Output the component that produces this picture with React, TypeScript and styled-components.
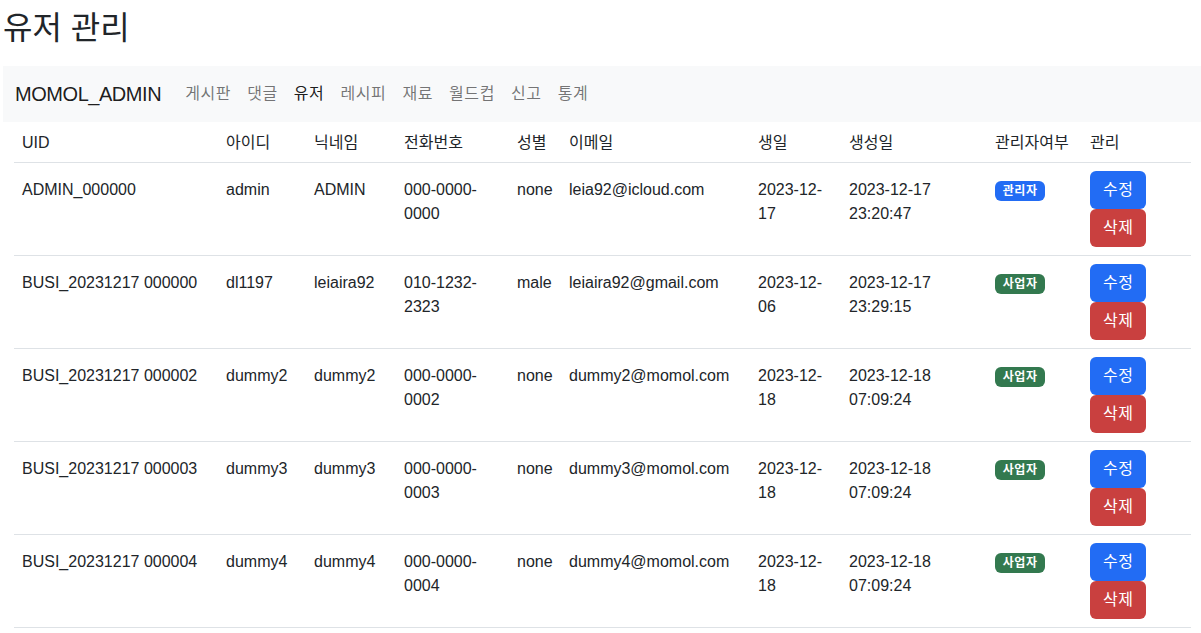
import React from "react";
import styled, { createGlobalStyle } from "styled-components";

const GlobalStyle = createGlobalStyle`
  * { box-sizing: border-box; }
  html, body { margin: 0; padding: 0; background: #fff; }
  body {
    font-family: "Liberation Sans", "Noto Sans CJK KR", sans-serif;
    font-size: 16px;
    line-height: 1.5;
    color: #212529;
  }
`;

const Page = styled.div`
  padding: 0 0 0 3px;
`;

const Title = styled.h2`
  margin: 0;
  padding: 9px 0 0 0;
  height: 66px;
  font-size: 32px;
  font-weight: 400;
  line-height: 1.2;
  color: #212529;
`;

const NavBar = styled.nav`
  display: flex;
  align-items: center;
  height: 56px;
  padding: 8px 12px;
  background: #f8f9fa;
`;

const Brand = styled.span`
  font-size: 20px;
  line-height: 30px;
  padding: 5px 0;
  margin-right: 16px;
  letter-spacing: -0.45px;
  color: rgba(0, 0, 0, 0.9);
`;

const NavList = styled.div`
  display: flex;
  align-items: center;
`;

const NavLink = styled.a<{ $active?: boolean }>`
  display: block;
  padding: 8px;
  line-height: 24px;
  font-size: 16px;
  letter-spacing: 0.6px;
  text-decoration: none;
  color: ${(p) => (p.$active ? "rgba(0,0,0,0.9)" : "rgba(0,0,0,0.55)")};
  cursor: pointer;
`;

const TableWrap = styled.div`
  padding: 0 10px 0 11px;
`;

const Table = styled.table`
  width: 100%;
  border-collapse: collapse;
  table-layout: fixed;
`;

const Col = styled.col<{ $w: number }>`
  width: ${(p) => p.$w}px;
`;

const HeadCell = styled.th`
  text-align: left;
  font-weight: 400;
  padding: 9px 8px 7px;
  line-height: 24px;
  white-space: nowrap;
  border-bottom: 1px solid #dee2e6;
`;

const Row = styled.tr`
  border-bottom: 1px solid #dee2e6;
`;

const Cell = styled.td`
  padding: 8px;
  line-height: 24px;
  vertical-align: baseline;
  word-wrap: break-word;
`;

const Badge = styled.span<{ $tone: "admin" | "biz" }>`
  display: inline-block;
  padding: 4.2px 7.8px;
  font-size: 12px;
  font-weight: 700;
  line-height: 1;
  letter-spacing: 0.5px;
  color: #fff;
  border-radius: 6px;
  white-space: nowrap;
  vertical-align: baseline;
  background: ${(p) => (p.$tone === "admin" ? "#226cf4" : "#33794f")};
`;

const Actions = styled.div`
  display: flex;
  flex-direction: column;
  align-items: flex-start;
`;

const Button = styled.button<{ $variant: "edit" | "del" }>`
  display: inline-block;
  padding: 6px 12px;
  font-family: inherit;
  font-size: 16px;
  line-height: 24px;
  letter-spacing: 0.5px;
  color: #fff;
  border: 1px solid transparent;
  border-radius: 6px;
  cursor: pointer;
  background: ${(p) => (p.$variant === "edit" ? "#226cf4" : "#c9403f")};
`;

type User = {
  uid: string;
  id: string;
  nick: string;
  phone: string;
  gender: string;
  email: string;
  birth: string;
  created: string;
  admin: boolean;
};

const users: User[] = [
  { uid: "ADMIN_000000", id: "admin", nick: "ADMIN", phone: "000-0000-0000", gender: "none", email: "leia92@icloud.com", birth: "2023-12-17", created: "2023-12-17 23:20:47", admin: true },
  { uid: "BUSI_20231217 000000", id: "dl1197", nick: "leiaira92", phone: "010-1232-2323", gender: "male", email: "leiaira92@gmail.com", birth: "2023-12-06", created: "2023-12-17 23:29:15", admin: false },
  { uid: "BUSI_20231217 000002", id: "dummy2", nick: "dummy2", phone: "000-0000-0002", gender: "none", email: "dummy2@momol.com", birth: "2023-12-18", created: "2023-12-18 07:09:24", admin: false },
  { uid: "BUSI_20231217 000003", id: "dummy3", nick: "dummy3", phone: "000-0000-0003", gender: "none", email: "dummy3@momol.com", birth: "2023-12-18", created: "2023-12-18 07:09:24", admin: false },
  { uid: "BUSI_20231217 000004", id: "dummy4", nick: "dummy4", phone: "000-0000-0004", gender: "none", email: "dummy4@momol.com", birth: "2023-12-18", created: "2023-12-18 07:09:24", admin: false },
];

const columns = [
  { label: "UID", w: 204 },
  { label: "아이디", w: 88 },
  { label: "닉네임", w: 90 },
  { label: "전화번호", w: 113 },
  { label: "성별", w: 52 },
  { label: "이메일", w: 189 },
  { label: "생일", w: 91 },
  { label: "생성일", w: 146 },
  { label: "관리자여부", w: 95 },
  { label: "관리", w: 109 },
];

const navItems = ["게시판", "댓글", "유저", "레시피", "재료", "월드컵", "신고", "통계"];

export default function App() {
  return (
    <>
      <GlobalStyle />
      <Page>
        <Title>유저 관리</Title>
        <NavBar>
          <Brand>MOMOL_ADMIN</Brand>
          <NavList>
            {navItems.map((n) => (
              <NavLink key={n} $active={n === "유저"}>
                {n}
              </NavLink>
            ))}
          </NavList>
        </NavBar>
        <TableWrap>
          <Table>
            <colgroup>
              {columns.map((c) => (
                <Col key={c.label} $w={c.w} />
              ))}
            </colgroup>
            <thead>
              <tr>
                {columns.map((c) => (
                  <HeadCell key={c.label}>{c.label}</HeadCell>
                ))}
              </tr>
            </thead>
            <tbody>
              {users.map((u) => (
                <Row key={u.uid}>
                  <Cell>{u.uid}</Cell>
                  <Cell>{u.id}</Cell>
                  <Cell>{u.nick}</Cell>
                  <Cell>{u.phone}</Cell>
                  <Cell>{u.gender}</Cell>
                  <Cell>{u.email}</Cell>
                  <Cell>{u.birth}</Cell>
                  <Cell>{u.created}</Cell>
                  <Cell>
                    <Badge $tone={u.admin ? "admin" : "biz"}>{u.admin ? "관리자" : "사업자"}</Badge>
                  </Cell>
                  <Cell>
                    <Actions>
                      <Button $variant="edit">수정</Button>
                      <Button $variant="del">삭제</Button>
                    </Actions>
                  </Cell>
                </Row>
              ))}
            </tbody>
          </Table>
        </TableWrap>
      </Page>
    </>
  );
}
